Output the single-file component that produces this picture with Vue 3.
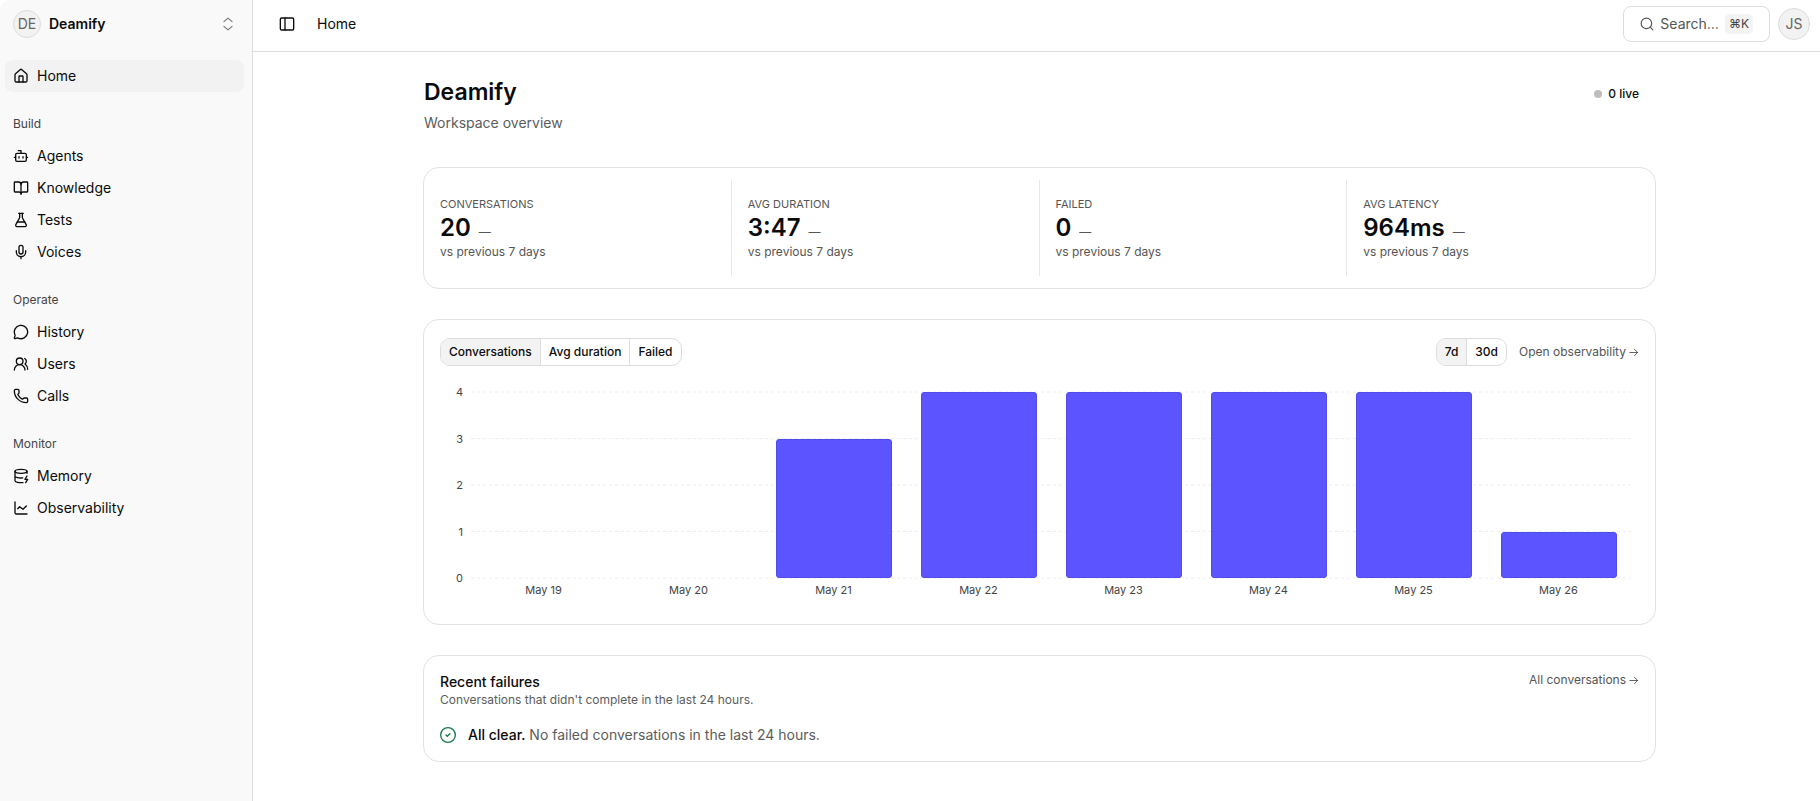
<script setup>
import { ref } from 'vue'

const icons = {
  home: '<path d="M15 21v-8a1 1 0 0 0-1-1h-4a1 1 0 0 0-1 1v8"/><path d="M3 10a2 2 0 0 1 .709-1.528l7-5.999a2 2 0 0 1 2.582 0l7 5.999A2 2 0 0 1 21 10v9a2 2 0 0 1-2 2H5a2 2 0 0 1-2-2z"/>',
  bot: '<path d="M12 8V4H8"/><rect width="16" height="12" x="4" y="8" rx="2"/><path d="M2 14h2M20 14h2M15 13v2M9 13v2"/>',
  book: '<path d="M12 7v14"/><path d="M3 18a1 1 0 0 1-1-1V4a1 1 0 0 1 1-1h5a4 4 0 0 1 4 4 4 4 0 0 1 4-4h5a1 1 0 0 1 1 1v13a1 1 0 0 1-1 1h-6a3 3 0 0 0-3 3 3 3 0 0 0-3-3z"/>',
  flask: '<path d="M14 2v6a2 2 0 0 0 .245.96l5.51 10.08A2 2 0 0 1 18 22H6a2 2 0 0 1-1.755-2.96l5.51-10.08A2 2 0 0 0 10 8V2"/><path d="M6.453 15h11.094M8.5 2h7"/>',
  mic: '<path d="M12 19v3"/><path d="M19 10v2a7 7 0 0 1-14 0v-2"/><rect x="9" y="2" width="6" height="13" rx="3"/>',
  chat: '<path d="M2.992 16.342a2 2 0 0 1 .094 1.167l-1.065 3.29a1 1 0 0 0 1.236 1.168l3.413-.998a2 2 0 0 1 1.099.092 10 10 0 1 0-4.777-4.719"/>',
  users: '<path d="M18 21a8 8 0 0 0-16 0"/><circle cx="10" cy="8" r="5"/><path d="M22 20c0-3.37-2-6.5-4-8a5 5 0 0 0-.45-8.3"/>',
  phone: '<path d="M13.832 16.568a1 1 0 0 0 1.213-.303l.355-.465A2 2 0 0 1 17 15h3a2 2 0 0 1 2 2v3a2 2 0 0 1-2 2A18 18 0 0 1 2 4a2 2 0 0 1 2-2h3a2 2 0 0 1 2 2v3a2 2 0 0 1-.8 1.6l-.468.351a1 1 0 0 0-.292 1.233 14 14 0 0 0 6.392 6.384"/>',
  database: '<ellipse cx="12" cy="5" rx="9" ry="3"/><path d="M3 5v14a9 3 0 0 0 12 2.84M21 5v3M21 12l-3 5h4l-3 5M3 12a9 3 0 0 0 11.59 2.87"/>',
  chart: '<path d="M3 3v16a2 2 0 0 0 2 2h16"/><path d="m7 13 3-3 5 4 5-5"/>'
}

const groups = [
  { items: [{ label: 'Home', icon: 'home', active: true }] },
  {
    title: 'Build',
    items: [
      { label: 'Agents', icon: 'bot' },
      { label: 'Knowledge', icon: 'book' },
      { label: 'Tests', icon: 'flask' },
      { label: 'Voices', icon: 'mic' }
    ]
  },
  {
    title: 'Operate',
    items: [
      { label: 'History', icon: 'chat' },
      { label: 'Users', icon: 'users' },
      { label: 'Calls', icon: 'phone' }
    ]
  },
  {
    title: 'Monitor',
    items: [
      { label: 'Memory', icon: 'database' },
      { label: 'Observability', icon: 'chart' }
    ]
  }
]

const stats = [
  { label: 'CONVERSATIONS', value: '20' },
  { label: 'AVG DURATION', value: '3:47' },
  { label: 'FAILED', value: '0' },
  { label: 'AVG LATENCY', value: '964ms' }
]

const metrics = ['Conversations', 'Avg duration', 'Failed']
const ranges = ['7d', '30d']
const metric = ref('Conversations')
const range = ref('7d')

const ticks = [4, 3, 2, 1, 0]
const days = [
  { day: 'May 19', count: 0 },
  { day: 'May 20', count: 0 },
  { day: 'May 21', count: 3 },
  { day: 'May 22', count: 4 },
  { day: 'May 23', count: 4 },
  { day: 'May 24', count: 4 },
  { day: 'May 25', count: 4 },
  { day: 'May 26', count: 1 }
]
</script>

<template>
  <div class="app">
    <aside class="sidebar">
      <button class="workspace" type="button">
        <span class="avatar small">DE</span>
        <span class="workspace-name">Deamify</span>
        <svg class="icon chevrons" viewBox="0 0 24 24" aria-hidden="true"><path d="m5 16 7 6 7-6M5 8l7-6 7 6" /></svg>
      </button>
      <nav class="nav">
        <section v-for="(group, i) in groups" :key="i" class="group">
          <h2 v-if="group.title" class="group-title">{{ group.title }}</h2>
          <a v-for="item in group.items" :key="item.label" href="#" class="nav-item" :class="{ active: item.active }">
            <svg class="icon" viewBox="0 0 24 24" aria-hidden="true" v-html="icons[item.icon]"></svg>
            <span>{{ item.label }}</span>
          </a>
        </section>
      </nav>
    </aside>

    <div class="main">
      <header class="topbar">
        <button class="toggle" type="button" aria-label="Toggle sidebar">
          <svg class="icon" viewBox="0 0 24 24" aria-hidden="true"><rect width="20" height="18" x="2" y="3" rx="2" /><path d="M9 3v18" /></svg>
        </button>
        <span class="crumb">Home</span>
        <button class="search" type="button">
          <svg class="icon" viewBox="0 0 24 24" aria-hidden="true"><circle cx="11" cy="11" r="9" /><path d="m22 22-4.6-4.6" /></svg>
          <span>Search…</span>
          <kbd>⌘K</kbd>
        </button>
        <button class="avatar" type="button">JS</button>
      </header>

      <main class="content">
        <div class="heading">
          <div>
            <h1>Deamify</h1>
            <p>Workspace overview</p>
          </div>
          <span class="live"><i class="dot"></i>0 live</span>
        </div>

        <section class="card stats">
          <div v-for="s in stats" :key="s.label" class="stat">
            <span class="stat-label">{{ s.label }}</span>
            <div class="stat-row"><strong>{{ s.value }}</strong><span>—</span></div>
            <span class="stat-note">vs previous 7 days</span>
          </div>
        </section>

        <section class="card chart-card">
          <div class="toolbar">
            <div class="segments">
              <button v-for="m in metrics" :key="m" type="button" :class="{ on: metric === m }" @click="metric = m">{{ m }}</button>
            </div>
            <div class="toolbar-end">
              <div class="segments">
                <button v-for="r in ranges" :key="r" type="button" :class="{ on: range === r }" @click="range = r">{{ r }}</button>
              </div>
              <a href="#" class="link">Open observability
                <svg class="arrow" viewBox="0 0 24 24" aria-hidden="true"><path d="M4 12h17M14 5l7 7-7 7" /></svg>
              </a>
            </div>
          </div>
          <div class="chart">
            <div class="y-axis"><span v-for="t in ticks" :key="t">{{ t }}</span></div>
            <div class="plot">
              <svg class="grid-lines" aria-hidden="true">
                <line v-for="t in ticks" :key="t" x1="0" x2="100%" :y1="t * 25 + '%'" :y2="t * 25 + '%'" />
              </svg>
              <div v-for="d in days" :key="d.day" class="column">
                <div v-if="d.count" class="bar" :style="{ height: d.count * 25 + '%' }"></div>
              </div>
            </div>
            <div class="x-axis"><span v-for="d in days" :key="d.day">{{ d.day }}</span></div>
          </div>
        </section>

        <section class="card failures">
          <div class="failures-head">
            <div>
              <h2>Recent failures</h2>
              <p>Conversations that didn't complete in the last 24 hours.</p>
            </div>
            <a href="#" class="link">All conversations
              <svg class="arrow" viewBox="0 0 24 24" aria-hidden="true"><path d="M4 12h17M14 5l7 7-7 7" /></svg>
            </a>
          </div>
          <div class="clear">
            <svg class="icon check" viewBox="0 0 24 24" aria-hidden="true"><circle cx="12" cy="12" r="11" /><path d="m9 12 2 2 4-4" /></svg>
            <p><strong>All clear.</strong> No failed conversations in the last 24 hours.</p>
          </div>
        </section>
      </main>
    </div>
  </div>
</template>

<style>
body {
  margin: 0;
  background: #fff;
}
</style>

<style scoped>
.app {
  display: flex;
  min-height: 100vh;
  font-family: Inter, "Liberation Sans", sans-serif;
  font-size: 14px;
  line-height: 20px;
  color: #0b0b0b;
}
* {
  box-sizing: border-box;
}
h1, h2, p {
  margin: 0;
}
button {
  font: inherit;
  color: inherit;
  background: none;
  border: 0;
  padding: 0;
  cursor: pointer;
}
a {
  color: inherit;
  text-decoration: none;
}
.icon {
  width: 16px;
  height: 16px;
  flex: none;
  fill: none;
  stroke: currentColor;
  stroke-width: 2;
  stroke-linecap: round;
  stroke-linejoin: round;
}

.sidebar {
  width: 253px;
  flex: none;
  background: #f9f9f9;
  border-right: 1px solid #dedede;
  border-top-left-radius: 10px;
}
.workspace {
  display: flex;
  align-items: center;
  gap: 8px;
  width: 100%;
  height: 48px;
  padding: 0 16px 0 13px;
  text-align: left;
}
.workspace-name {
  flex: 1;
  font-weight: 600;
}
.chevrons {
  color: #777;
  width: 14px;
  height: 14px;
  margin-right: 1px;
}
.avatar {
  display: flex;
  align-items: center;
  justify-content: center;
  width: 32px;
  height: 32px;
  flex: none;
  border: 1px solid #dcdcdc;
  border-radius: 50%;
  background: #f2f2f2;
  color: #666;
}
.avatar.small {
  width: 28px;
  height: 28px;
}
.nav {
  display: flex;
  flex-direction: column;
  gap: 16px;
  padding: 12px 8px 0 5px;
}
.group-title {
  padding-left: 8px;
  font-size: 12px;
  font-weight: 400;
  line-height: 32px;
  color: #444;
}
.nav-item {
  display: flex;
  align-items: center;
  gap: 8px;
  height: 32px;
  padding: 0 8px;
  border-radius: 8px;
}
.nav-item.active {
  background: #f2f2f2;
}

.main {
  flex: 1;
  min-width: 0;
}
.topbar {
  display: flex;
  align-items: center;
  height: 52px;
  padding: 0 10px 4px 26px;
  border-bottom: 1px solid #dedede;
}
.toggle {
  display: flex;
  margin-right: 22px;
}
.crumb {
  flex: 1;
}
.search {
  display: flex;
  align-items: center;
  gap: 6px;
  height: 36px;
  padding: 0 16px;
  margin-right: 8px;
  border: 1px solid #dcdcdc;
  border-radius: 8px;
  color: #555;
}
.search .icon {
  width: 14px;
  height: 14px;
}
kbd {
  padding: 0 4px;
  border-radius: 5px;
  background: #f3f3f3;
  font-family: inherit;
  font-size: 12px;
  line-height: 20px;
  color: #444;
}

.content {
  max-width: 1239px;
  margin: 0 auto;
  padding: 24px 0 40px 6px;
}
.heading {
  display: flex;
  justify-content: space-between;
  padding: 0 17px 0 1px;
  margin-bottom: 34px;
}
h1 {
  font-size: 23px;
  font-weight: 600;
  line-height: 32px;
}
.heading p {
  margin-top: 5px;
  color: #5c5c5c;
}
.live {
  display: flex;
  align-items: center;
  gap: 6px;
  height: 36px;
  font-size: 12px;
  font-weight: 500;
}
.dot {
  width: 8px;
  height: 8px;
  border-radius: 50%;
  background: #bdbdbd;
}

.card {
  border: 1px solid #e2e2e2;
  border-radius: 16px;
  margin-bottom: 30px;
}
.stats {
  display: grid;
  grid-template-columns: repeat(4, 1fr);
  padding: 12px 0;
}
.stat {
  display: flex;
  flex-direction: column;
  padding: 16px;
  border-right: 1px solid #e8e8e8;
}
.stat:last-child {
  border-right: 0;
}
.stat-label, .stat-note {
  font-size: 12px;
  line-height: 16px;
  color: #555;
}
.stat-label {
  font-size: 11px;
}
.stat-row {
  display: flex;
  align-items: baseline;
  gap: 8px;
}
.stat-row strong {
  font-size: 24px;
  font-weight: 600;
  line-height: 32px;
}
.stat-row span {
  font-size: 12px;
  line-height: 16px;
  color: #555;
}

.chart-card {
  padding: 18px 16px 22px;
}
.toolbar, .toolbar-end, .segments, .link {
  display: flex;
  align-items: center;
}
.toolbar {
  justify-content: space-between;
}
.toolbar-end {
  gap: 12px;
}
.segments {
  border: 1px solid #dcdcdc;
  border-radius: 10px;
  overflow: hidden;
}
.segments button {
  height: 26px;
  padding: 0 8px;
  font-size: 12px;
  font-weight: 500;
}
.segments button + button {
  border-left: 1px solid #dcdcdc;
}
.segments .on {
  background: #f3f3f3;
}
.link {
  gap: 2px;
  font-size: 12px;
  line-height: 16px;
  color: #555;
}
.arrow {
  width: 11px;
  height: 11px;
  fill: none;
  stroke: currentColor;
  stroke-width: 2;
  stroke-linecap: round;
  stroke-linejoin: round;
}
.chart {
  display: grid;
  grid-template-columns: 23px 1fr;
  grid-template-rows: 186px 24px;
  column-gap: 8px;
  margin-top: 26px;
  padding-right: 8px;
  font-size: 11px;
  color: #444;
}
.y-axis {
  display: flex;
  flex-direction: column;
  justify-content: space-between;
  margin: -8px 0;
  text-align: right;
  line-height: 16px;
}
.plot {
  position: relative;
  display: grid;
  grid-template-columns: repeat(8, 1fr);
}
.grid-lines {
  position: absolute;
  inset: 0;
  width: 100%;
  height: 100%;
  overflow: visible;
}
.grid-lines line {
  stroke: #ececec;
  stroke-dasharray: 3 3;
}
.column {
  position: relative;
  display: flex;
  align-items: flex-end;
  padding: 0 10%;
}
.bar {
  width: 100%;
  border: 1px solid #524bec;
  border-radius: 3px;
  background: #5b54ff;
}
.x-axis {
  grid-column: 2;
  display: grid;
  grid-template-columns: repeat(8, 1fr);
  text-align: center;
  line-height: 24px;
}

.failures {
  margin-bottom: 0;
  padding: 16px;
}
.failures-head {
  display: flex;
  justify-content: space-between;
  align-items: flex-start;
}
.failures h2 {
  font-size: 14px;
  font-weight: 500;
}
.failures-head p {
  font-size: 12px;
  line-height: 16px;
  color: #5c5c5c;
}
.clear {
  display: flex;
  align-items: center;
  gap: 12px;
  margin-top: 17px;
  color: #5c5c5c;
}
.clear strong {
  font-weight: 500;
  color: #0b0b0b;
}
.check {
  color: #16794c;
}
</style>
